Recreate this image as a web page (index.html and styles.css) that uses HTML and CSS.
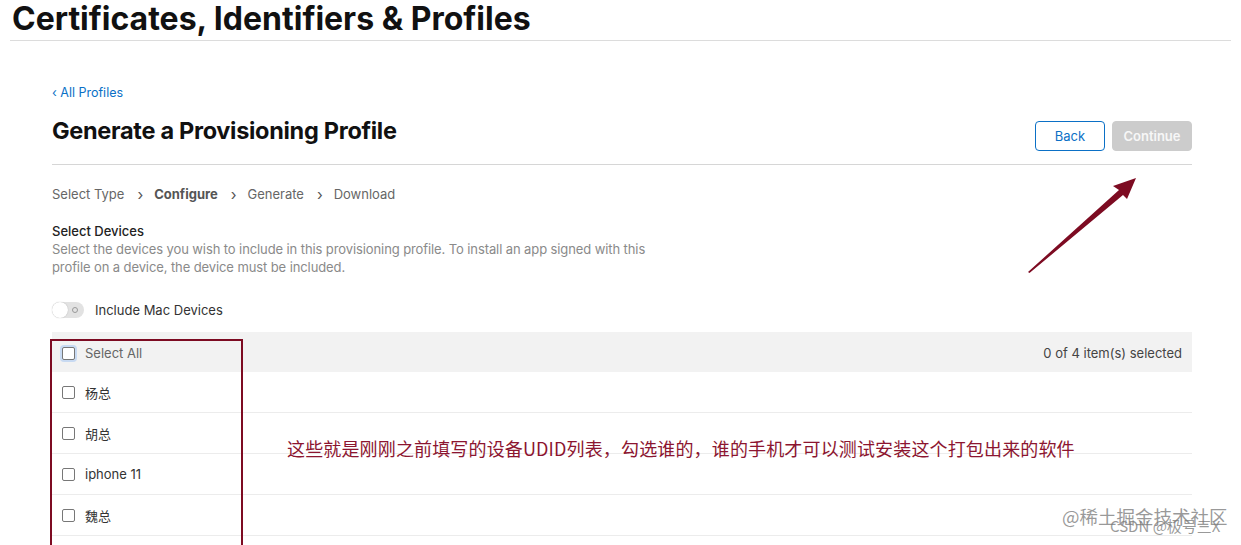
FILE: index.html
```html
<!DOCTYPE html>
<html lang="en">
<head>
<meta charset="utf-8">
<title>Certificates, Identifiers &amp; Profiles</title>
<link rel="stylesheet" href="styles.css">
</head>
<body>
<header class="top">
  <h1 class="top-title">Certificates, Identifiers &amp; Profiles</h1>
</header>
<main class="content">
  <a class="back-link" href="#">&lsaquo; All Profiles</a>
  <div class="page-head">
    <h2 class="page-title">Generate a Provisioning Profile</h2>
    <div class="actions">
      <button class="btn btn-back">Back</button>
      <button class="btn btn-continue" disabled>Continue</button>
    </div>
  </div>
  <nav class="steps">
    <span class="step">Select Type</span>
    <span class="chev">&rsaquo;</span>
    <span class="step current">Configure</span>
    <span class="chev">&rsaquo;</span>
    <span class="step">Generate</span>
    <span class="chev">&rsaquo;</span>
    <span class="step">Download</span>
  </nav>
  <section class="section">
    <h3 class="section-title">Select Devices</h3>
    <p class="section-desc">Select the devices you wish to include in this provisioning profile. To install an app signed with this profile on a device, the device must be included.</p>
  </section>
  <div class="toggle-row">
    <span class="toggle"><span class="knob"></span><span class="ring"></span></span>
    <span class="toggle-label">Include Mac Devices</span>
  </div>
  <div class="table">
    <div class="table-head">
      <label class="cell"><span class="cb cb-focus"></span><span class="head-label">Select All</span></label>
      <span class="count">0 of 4 item(s) selected</span>
    </div>
    <div class="row"><span class="cb"></span><span class="name">杨总</span></div>
    <div class="row"><span class="cb"></span><span class="name">胡总</span></div>
    <div class="row"><span class="cb"></span><span class="name">iphone 11</span></div>
    <div class="row"><span class="cb"></span><span class="name">魏总</span></div>
    <div class="highlight-box"></div>
    <p class="note">这些就是刚刚之前填写的设备UDID列表，勾选谁的，谁的手机才可以测试安装这个打包出来的软件</p>
  </div>
</main>
<svg class="arrow" width="112" height="100" viewBox="0 0 112 100">
  <path d="M0 96 L91 14 L85 10 L108 2 L99 23 L95 19 L1.5 97 Z" fill="#7d0b22"/>
</svg>
<div class="watermark">
  <span class="wm1">@稀土掘金技术社区</span>
  <span class="wm2">CSDN @极号三X</span>
</div>
</body>
</html>
```
FILE: styles.css
```css
* { box-sizing: border-box; }
html, body { margin: 0; padding: 0; background: #fff; }
body {
  font-family: Inter, "Noto Sans", "Noto Sans CJK SC", sans-serif;
  color: #333;
  width: 1241px;
  height: 545px;
  overflow: hidden;
  position: relative;
}
.top {
  margin: 0 10px;
  border-bottom: 1px solid #dcdcdc;
  height: 41px;
}
.top-title {
  margin: 0;
  padding: 0 0 0 2px;
  font-size: 32px;
  line-height: 38px;
  font-weight: 700;
  letter-spacing: 0;
  color: #111;
}
.content {
  width: 1140px;
  margin-left: 52px;
  padding-top: 44px;
  position: relative;
}
.back-link {
  display: block;
  font-size: 12.5px;
  line-height: 16px;
  color: #0b70c6;
  text-decoration: none;
}
.page-head {
  display: flex;
  align-items: flex-start;
  justify-content: space-between;
  border-bottom: 1px solid #d6d6d6;
  height: 49px;
  margin-top: 15px;
}
.page-title {
  margin: 0;
  font-size: 23.5px;
  line-height: 30px;
  font-weight: 700;
  letter-spacing: -0.3px;
  color: #111;
}
.actions { display: flex; gap: 7px; margin-top: 5px; }
.btn {
  height: 30px;
  border-radius: 4px;
  font-family: inherit;
  font-size: 13px;
  padding: 0;
}
.btn-back {
  width: 70px;
  background: #fff;
  border: 1px solid #0b70c6;
  color: #0b70c6;
}
.btn-continue {
  width: 80px;
  background: #cccccc;
  border: 1px solid #cccccc;
  color: #f7f7f7;
  font-weight: 600;
}
.steps {
  display: flex;
  align-items: center;
  height: 18px;
  margin-top: 20px;
  font-size: 13px;
  line-height: 18px;
  color: #666;
}
.step.current { font-weight: 700; color: #555; }
.chev { margin: 2px 11px 0 13px; font-size: 15px; line-height: 18px; color: #555; }
.section { margin-top: 19px; }
.section-title {
  margin: 0;
  font-size: 13px;
  line-height: 18px;
  font-weight: 500;
  color: #222;
}
.section-desc {
  margin: 0;
  width: 610px;
  font-size: 13px;
  line-height: 18px;
  letter-spacing: -0.1px;
  color: #8a8a8a;
}
.toggle-row {
  display: flex;
  align-items: center;
  gap: 11px;
  margin-top: 25px;
  height: 18px;
}
.toggle {
  position: relative;
  width: 32px;
  height: 16px;
  border-radius: 8px;
  background: #e2e2e2;
  display: inline-block;
}
.knob {
  position: absolute;
  left: 0; top: 0;
  width: 16px; height: 16px;
  border-radius: 50%;
  background: #fff;
  box-shadow: 0 0 1px rgba(0,0,0,0.3);
}
.ring {
  position: absolute;
  left: 20px; top: 5px;
  width: 6px; height: 6px;
  border-radius: 50%;
  border: 1px solid #999;
}
.toggle-label { font-size: 13px; color: #333; }
.table { margin-top: 13px; position: relative; }
.table-head {
  display: flex;
  align-items: center;
  justify-content: space-between;
  height: 40px;
  background: #f2f2f2;
  padding: 2px 10px 0;
}
.cell { display: flex; align-items: center; gap: 10px; }
.head-label { font-size: 13px; color: #666; }
.count { font-size: 13px; color: #444; }
.cb {
  display: inline-block;
  width: 13px;
  height: 13px;
  border: 1px solid #777;
  border-radius: 2px;
  background: #fff;
}
.cb-focus { box-shadow: 0 0 0 2px #c8daf2; }
.row {
  display: flex;
  align-items: center;
  gap: 10px;
  height: 41px;
  padding: 0 10px;
  border-bottom: 1px solid #ececec;
}
.name { font-size: 13px; color: #333; }
.highlight-box {
  position: absolute;
  left: -2px;
  top: 7px;
  width: 193px;
  height: 220px;
  border: 2px solid #7d0b22;
}
.note {
  position: absolute;
  left: 235px;
  top: 104px;
  margin: 0;
  font-size: 18px;
  line-height: 24px;
  letter-spacing: 0.15px;
  color: #8c1530;
  font-family: "Noto Sans CJK SC", sans-serif;
  white-space: nowrap;
}
.arrow {
  position: absolute;
  left: 1028px;
  top: 176px;
}
.watermark {
  position: absolute;
  left: 1062px;
  top: 503px;
  width: 179px;
  height: 42px;
  font-family: "Noto Sans CJK SC", sans-serif;
  color: rgba(120,120,120,0.75);
}
.wm1 { position: absolute; left: 0; top: 0; font-size: 18.5px; line-height: 26px; white-space: nowrap; }
.wm2 { position: absolute; left: 48px; top: 13px; font-size: 15px; line-height: 20px; white-space: nowrap; }
```
